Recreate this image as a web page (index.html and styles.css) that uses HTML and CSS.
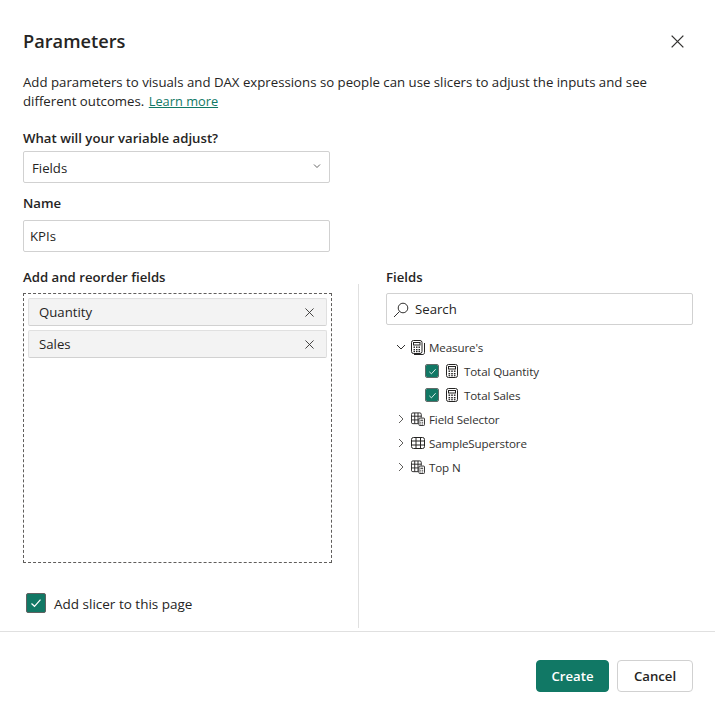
FILE: index.html
```html
<!DOCTYPE html>
<html lang="en">
<head>
<meta charset="utf-8">
<title>Parameters</title>
<link rel="stylesheet" href="styles.css">
</head>
<body>
<svg class="defs" width="0" height="0" aria-hidden="true">
  <defs>
    <symbol id="calc" viewBox="0 0 14 14">
      <g fill="none" stroke="#252423" stroke-width="1"><rect x="1.500" y="0.500" width="11" height="13" rx="2"/><rect x="3.500" y="2.500" width="7" height="2.500"/></g>
      <g fill="#252423"><rect x="3.500" y="6.500" width="1.600" height="1.400"/><rect x="6.200" y="6.500" width="1.600" height="1.400"/><rect x="8.900" y="6.500" width="1.600" height="1.400"/><rect x="3.500" y="9" width="1.600" height="1.400"/><rect x="6.200" y="9" width="1.600" height="1.400"/><rect x="8.900" y="9" width="1.600" height="1.400"/><rect x="3.500" y="11.100" width="1.600" height="1.200"/><rect x="6.200" y="11.100" width="1.600" height="1.200"/><rect x="8.900" y="11.100" width="1.600" height="1.200"/></g>
    </symbol>
    <symbol id="calcstack" viewBox="0 0 14 15">
      <g fill="none" stroke="#252423" stroke-width="1"><rect x=".5" y="0.500" width="10.500" height="13" rx="2"/><rect x="2.500" y="2.500" width="6.500" height="2.500"/><path d="M3 14.500H11A2 2 0 0 0 13.500 12.500V3"/></g>
      <g fill="#252423"><rect x="2.500" y="6.500" width="1.500" height="1.400"/><rect x="5" y="6.500" width="1.500" height="1.400"/><rect x="7.500" y="6.500" width="1.500" height="1.400"/><rect x="2.500" y="9" width="1.500" height="1.400"/><rect x="5" y="9" width="1.500" height="1.400"/><rect x="7.500" y="9" width="1.500" height="1.400"/><rect x="2.500" y="11" width="1.500" height="1.200"/><rect x="5" y="11" width="1.500" height="1.200"/><rect x="7.500" y="11" width="1.500" height="1.200"/></g>
    </symbol>
    <symbol id="table" viewBox="0 0 14 14">
      <path fill="none" stroke="#252423" d="M2.500 1.500H11.500A2 2 0 0 1 13.500 3.500V10.500A2 2 0 0 1 11.500 12.500H2.500A2 2 0 0 1 .5 10.500V3.500A2 2 0 0 1 2.500 1.500ZM.5 5H13.500M.5 9H13.500M5 1.500V12.500M9.500 1.500V12.500"/>
    </symbol>
    <symbol id="tablecalc" viewBox="0 0 15 15">
      <path fill="none" stroke="#252423" d="M8 12.500H2A1.500 1.500 0 0 1 .5 11V2.500A1.500 1.500 0 0 1 2 1H9.500A1.500 1.500 0 0 1 11 2.500V6M.5 4.500H11M.5 8.500H8M4 1V12.500M7.500 1V12.500"/>
      <rect x="8.500" y="6.500" width="6" height="8" rx="1" fill="#fff" stroke="#252423"/>
      <path d="M10 8.200H13V9.500H10ZM10 10.500H11V11.500H10ZM12 10.500H13V11.500H12ZM10 12.300H11V13.300H10ZM12 12.300H13V13.300H12Z" fill="#252423"/>
    </symbol>
    <symbol id="cross" viewBox="0 0 10 10"><path d="M.5.500 9.500 9.500M9.500.500.5 9.500" fill="none" stroke="#323130"/></symbol>
    <symbol id="chev-r" viewBox="0 0 8 10"><path d="M2 1 6 5 2 9" fill="none" stroke="#605e5c"/></symbol>
    <symbol id="chev-d" viewBox="0 0 10 8"><path d="M1 2 5 6 9 2" fill="none" stroke="#323130"/></symbol>
    <symbol id="tick" viewBox="0 0 12 10"><path d="M1.500 5.500 4.500 8.300 10.500 1.700" fill="none" stroke="#fff" stroke-width="1.200"/></symbol>
  </defs>
</svg>
<main class="dialog">
  <header class="head">
    <h1 class="title">Parameters</h1>
    <svg class="close"><use href="#cross"/></svg>
  </header>
  <p class="intro">Add parameters to visuals and DAX expressions so people can use slicers to adjust the inputs and see different outcomes. <a class="link" href="#">Learn more</a></p>

  <div class="label first">What will your variable adjust?</div>
  <div class="field select"><span class="select-text">Fields</span><svg class="sel-chev"><use href="#chev-d"/></svg></div>
  <div class="label name">Name</div>
  <div class="field kpi">KPIs</div>

  <div class="columns">
    <section class="left">
      <div class="label col-label">Add and reorder fields</div>
      <div class="dropzone">
        <div class="chip"><span>Quantity</span><svg class="chip-x"><use href="#cross"/></svg></div>
        <div class="chip"><span>Sales</span><svg class="chip-x"><use href="#cross"/></svg></div>
      </div>
      <div class="slicer"><span class="bigcheck"><svg class="bigtick"><use href="#tick"/></svg></span><span class="slicer-text">Add slicer to this page</span></div>
    </section>
    <section class="right">
      <div class="label col-label">Fields</div>
      <div class="field search">
        <svg class="search-icon" viewBox="0 0 16 16"><circle cx="10" cy="6" r="4.800" fill="none" stroke="#323130"/><path d="M6.500 9.500 1 15" stroke="#323130" fill="none"/></svg>
        <span>Search</span>
      </div>
      <ul class="tree">
        <li class="row"><svg class="chev chev-down"><use href="#chev-d"/></svg><svg class="ic ic-stack"><use href="#calcstack"/></svg><span>Measure's</span></li>
        <li class="row child"><span class="check"><svg class="smalltick"><use href="#tick"/></svg></span><svg class="ic"><use href="#calc"/></svg><span class="child-text">Total Quantity</span></li>
        <li class="row child"><span class="check"><svg class="smalltick"><use href="#tick"/></svg></span><svg class="ic"><use href="#calc"/></svg><span class="child-text">Total Sales</span></li>
        <li class="row"><svg class="chev"><use href="#chev-r"/></svg><svg class="ic"><use href="#tablecalc"/></svg><span>Field Selector</span></li>
        <li class="row"><svg class="chev"><use href="#chev-r"/></svg><svg class="ic"><use href="#table"/></svg><span>SampleSuperstore</span></li>
        <li class="row"><svg class="chev"><use href="#chev-r"/></svg><svg class="ic"><use href="#tablecalc"/></svg><span>Top N</span></li>
      </ul>
    </section>
  </div>

  <footer class="foot">
    <button class="btn primary">Create</button>
    <button class="btn">Cancel</button>
  </footer>
</main>
</body>
</html>
```
FILE: styles.css
```css
* { box-sizing: border-box; }
html, body { margin: 0; padding: 0; background: #fff; }
.defs { position: absolute; }
body {
  font-family: "Open Sans", "Noto Sans", sans-serif;
  font-size: 13.2px;
  color: #252423;
  width: 715px;
  height: 714px;
  overflow: hidden;
}
.dialog { display: flex; flex-direction: column; height: 714px; }
.head {
  display: flex; justify-content: space-between; align-items: center;
  padding: 27px 23px 0 23px; height: 54px;
}
.title { margin: 0; font-size: 18.2px; font-weight: 600; line-height: 26px; color: #252423; }
.close { width: 13px; height: 13px; margin: 2px 8px 0 0; }
.intro { margin: 19px 23px 0; width: 650px; line-height: 19px; font-size: 13.22px; }
.link { color: #117865; text-decoration: underline; font-size: 12.8px; margin-left: 1px; }
.label { font-weight: 600; font-size: 13.2px; line-height: 18px; margin-left: 23px; }
.first { margin-top: 18px; }
.name { margin-top: 11px; }
.field {
  border: 1px solid #d1d1d1; border-radius: 2px; height: 32px; background: #fff;
  display: flex; align-items: center;
}
.select { width: 307px; margin: 4px 0 0 23px; padding: 0 8px; justify-content: space-between; }
.select-text { margin-top: 2px; }
.sel-chev { width: 8px; height: 6px; margin-right: 0; margin-top: -2px; }
.kpi { width: 307px; margin: 8px 0 0 23px; padding: 0 6px; }
.columns { display: flex; height: 344px; margin-top: 32px; }
.columns .col-label { margin-left: 0; margin-top: -16px; }
.left { width: 336px; margin-left: 23px; border-right: 1px solid #e0e0e0; display: flex; flex-direction: column; }
.dropzone {
  width: 309px; height: 270px; margin-top: 7px; border: 1px dashed #605e5c;
  padding: 4px; display: flex; flex-direction: column; gap: 4px;
}
.chip {
  height: 28px; background: #f3f3f3; border: 1px solid #e0e0e0; border-bottom-color: #d1d1d1; border-radius: 2px;
  display: flex; align-items: center; justify-content: space-between; padding: 0 12px 0 10px;
}
.chip-x { width: 9px; height: 9px; }
.slicer { display: flex; align-items: center; gap: 8px; margin: 29px 0 0 3px; }
.slicer-text { font-size: 13.5px; margin-top: 3px; }
.bigcheck {
  width: 20px; height: 20px; background: #117865; border: 1px solid #616161; border-radius: 2px;
  display: flex; align-items: center; justify-content: center;
}
.bigtick { width: 12px; height: 10px; }
.right { margin-left: 27px; width: 307px; }
.search { margin-top: 7px; padding: 0 6px; gap: 6px; }
.search-icon { width: 16px; height: 16px; margin-top: 2px; }
.tree { list-style: none; margin: 10px 0 0; padding: 0; font-size: 11.6px; letter-spacing: -0.12px; }
.row { height: 24px; display: flex; align-items: center; padding-left: 11px; color: #323130; }
.chev { width: 8px; height: 10px; margin-right: 6px; }
.chev-down { width: 10px; height: 8px; margin-left: -1px; margin-right: 5px; }
.ic { width: 14px; height: 14px; margin-right: 4px; }
.ic-stack { height: 15px; }
.child { padding-left: 40px; }
.check {
  width: 12px; height: 12px; background: #117865; border-radius: 1px; margin-right: 7px;
  display: flex; align-items: center; justify-content: center; outline: 1px solid #5f6b68;
}
.smalltick { width: 9px; height: 7px; }
.child-text { margin-left: 1px; }
.foot {
  border-top: 1px solid #e0e0e0; flex: 1; display: flex; justify-content: flex-end; align-items: flex-start;
  gap: 8px; padding: 28px 22px 0 0; margin-top: 3px;
}
.btn {
  font-family: inherit; font-size: 13.2px; font-weight: 600; height: 32px; width: 76px;
  border: 1px solid #d1d1d1; border-radius: 4px; background: #fff; color: #252423; padding: 0;
}
.primary { width: 73px; background: #117865; border-color: #117865; color: #fff; }
```
